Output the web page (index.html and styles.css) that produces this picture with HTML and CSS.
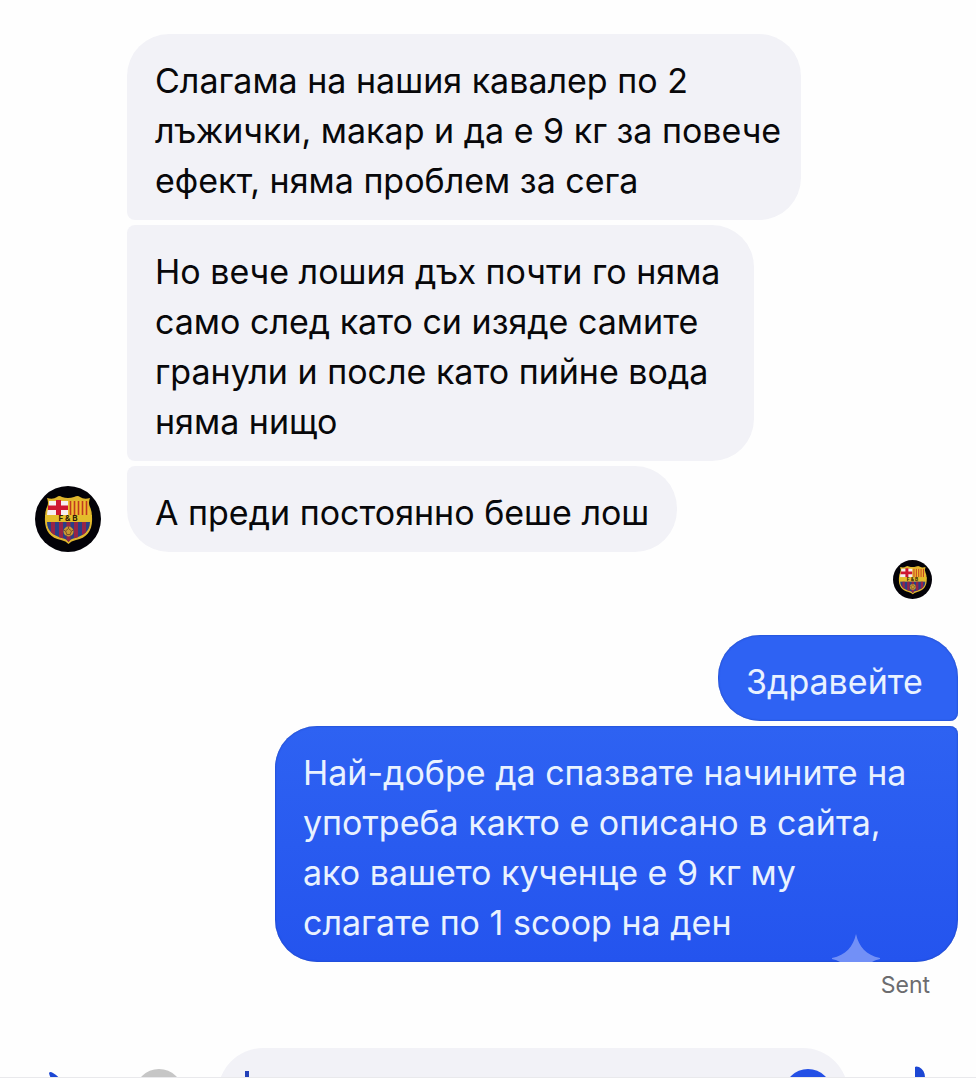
FILE: index.html
```
<!DOCTYPE html>
<html lang="bg">
<head>
<meta charset="utf-8">
<meta name="viewport" content="width=device-width, initial-scale=1">
<title>Chat</title>
<link rel="stylesheet" href="styles.css">
</head>
<body>
<svg class="defs" aria-hidden="true">
  <defs>
    <clipPath id="shield-lower"><path d="M12 36H55C55 46 47 50 40 52Q35 53 33.500 56Q32 53 27 52C20 50 12 46 12 36Z"/></clipPath>
    <symbol id="crest" viewBox="0 0 66 66">
      <circle cx="33" cy="33" r="33" fill="#030208"/>
      <path d="M12 12Q18 14 22 11Q24 9 27 11Q33 13 39 11Q43 9 45 11Q49 14 55 12Q53 17 55 21Q57 25 57 31C58 44 52 52 41 54Q36 55 33.500 58Q31 55 26 54C15 52 9 44 10 31Q10 25 12 21Q14 17 12 12Z" fill="#e0b62d"/>
      <path d="M14 15H33V29H12Q12 24 14 21Z" fill="#f6eef0"/>
      <path d="M21 14H26V19.500H33V24H26V29H21V24H13V19.500H21Z" fill="#cf1530"/>
      <path d="M33 15H53V21Q55 25 55 29H33Z" fill="#f0bd32"/>
      <path d="M35.500 15V29M39.500 15V29M43.500 15V29M47.500 15V29M51.500 15V29" stroke="#bf3a20" stroke-width="1.600"/>
      <g clip-path="url(#shield-lower)">
        <path d="M10 36H58V58H10Z" fill="#2a3f86"/>
        <path d="M18 36V58M26 36V58M33.500 36V58M41 36V58M49 36V58" stroke="#962448" stroke-width="4"/>
      </g>
      <path d="M10 29H57L56 36H11Z" fill="#e3bd2b"/>
      <text x="33" y="35" text-anchor="middle" font-size="8" font-weight="700" fill="#2c1c08">F &amp; B</text>
      <circle cx="33.500" cy="45.500" r="5" fill="#c99a32"/>
      <path d="M33.500 42.500L36.500 45L35 48.500H32L30.500 45ZM33.500 40.500V42.500M38.500 44L36.500 45M36.500 50L35 48.500M30.500 50L32 48.500M28.500 44L30.500 45" fill="none" stroke="#79512b" stroke-width="1"/>
    </symbol>
  </defs>
</svg>
<main class="chat">
  <section class="thread">
    <div class="incoming">
      <svg class="avatar" role="img" aria-label="Avatar"><use href="#crest"/></svg>
      <div class="stack">
        <p class="bubble bubble-in bubble-long first">Слагама на нашия кавалер по 2<br>лъжички, макар и да е 9 кг за повече<br>ефект, няма проблем за сега</p>
        <p class="bubble bubble-in bubble-long">Но вече лошия дъх почти го няма<br>само след като си изяде самите<br>гранули и после като пийне вода<br>няма нищо</p>
        <p class="bubble bubble-in last">А преди постоянно беше лош</p>
      </div>
    </div>
    <svg class="seen" role="img" aria-label="Seen"><use href="#crest"/></svg>
    <div class="stack outgoing">
      <p class="bubble bubble-out first">Здравейте</p>
      <p class="bubble bubble-out bubble-long last">Най-добре да спазвате начините на<br>употреба както е описано в сайта,<br>ако вашето кученце е 9 кг му<br>слагате по 1 scoop на ден
        <svg class="sparkle" viewBox="0 0 48 28" aria-hidden="true"><path d="M24 0C27 13 34 21 48 24V25Q43 26 40 28H8Q5 26 0 25V24C14 21 21 13 24 0Z" fill="#7290f7"/></svg>
      </p>
    </div>
    <p class="status" lang="en">Sent</p>
  </section>
  <form class="composer">
    <button class="icon-button" type="button" aria-label="More"><svg viewBox="0 0 52 48"><path d="M1 4Q2 2 5 4Q10 7 14 12L30 24L14 36L8 18Q2 9 1 4Z"/></svg></button>
    <button class="round-button muted" type="button" aria-label="Camera"></button>
    <label class="field">
      <span class="caret"></span>
      <input type="text" aria-label="Message">
      <button class="round-button" type="button" aria-label="Emoji"></button>
    </label>
    <button class="icon-button" type="button" aria-label="Like"><svg viewBox="0 0 48 48"><path d="M32 -2Q33 -3 36 -2Q42 1 42 9V18H48V40H20V20L32 14Z"/></svg></button>
  </form>
</main>
</body>
</html>
```
FILE: styles.css
```
* {
  box-sizing: border-box;
}

body {
  margin: 0;
  background: #fefefe;
  color: #08080a;
  font-family: Inter, "Noto Sans", sans-serif;
}

p {
  margin: 0;
}

button {
  padding: 0;
  border: 0;
  background: none;
}

.defs {
  position: absolute;
  width: 0;
  height: 0;
}

.chat {
  height: 100vh;
  overflow: hidden;
  border-bottom: 1px solid #e9e9ec;
}

.thread {
  display: flex;
  flex-direction: column;
  padding: 34px 18px 0 35px;
}

.incoming {
  display: flex;
  align-items: flex-end;
  gap: 26px;
}

.avatar {
  flex: none;
  width: 66px;
  height: 66px;
}

.stack {
  display: flex;
  flex-direction: column;
  align-items: flex-start;
  gap: 5px;
}

.outgoing {
  align-items: flex-end;
}

.bubble {
  padding: 22px 28px 14px;
  font-size: 34px;
  line-height: 50px;
}

.bubble-long {
  padding-right: 20px;
}

.bubble-in {
  border-radius: 8px 42px 42px 8px;
  background: #f2f2f7;
}

.bubble-in.bubble-long {
  min-width: 93%;
}

.bubble-in.first {
  border-top-left-radius: 42px;
}

.bubble-in.last {
  border-bottom-left-radius: 42px;
}

.bubble-out {
  position: relative;
  min-width: 26%;
  border-radius: 42px 8px 8px 42px;
  background: #2e62f3;
  box-shadow: inset 0 0 2px #1a3fae;
  color: #e9f2ff;
}

.bubble-out.bubble-long {
  min-width: 74%;
}

.bubble-out.first {
  border-top-right-radius: 42px;
}

.bubble-out.last {
  border-bottom-right-radius: 42px;
  background: linear-gradient(#2e62f2, #2454ee);
}

.sparkle {
  position: absolute;
  right: 78px;
  bottom: 0;
  width: 48px;
  height: 28px;
}

.seen {
  align-self: flex-end;
  width: 39px;
  height: 39px;
  margin: 8px 26px 36px 0;
}

.status {
  align-self: flex-end;
  margin: 9px 28px 0 0;
  color: #6c6c6f;
  font-size: 23px;
  line-height: 28px;
}

.composer {
  display: flex;
  align-items: center;
  gap: 35px;
  margin-top: 49px;
  padding: 0 45px 0 48px;
}

.icon-button {
  flex: none;
}

.icon-button svg {
  display: block;
  height: 48px;
  overflow: visible;
  fill: #1c47d4;
}

.round-button {
  flex: none;
  width: 48px;
  height: 48px;
  border-radius: 50%;
  background: #2450e6;
}

.round-button.muted {
  background: #c6c6c6;
}

.field {
  display: flex;
  flex: 1;
  align-items: center;
  height: 90px;
  min-width: 0;
  padding: 0 16px 0 27px;
  border-radius: 45px;
  background: #f2f2f7;
}

.caret {
  width: 4px;
  height: 44px;
  background: #2340b8;
}

.field input {
  flex: 1;
  min-width: 0;
  border: 0;
  outline: 0;
  background: none;
  font: inherit;
  font-size: 34px;
}
```
